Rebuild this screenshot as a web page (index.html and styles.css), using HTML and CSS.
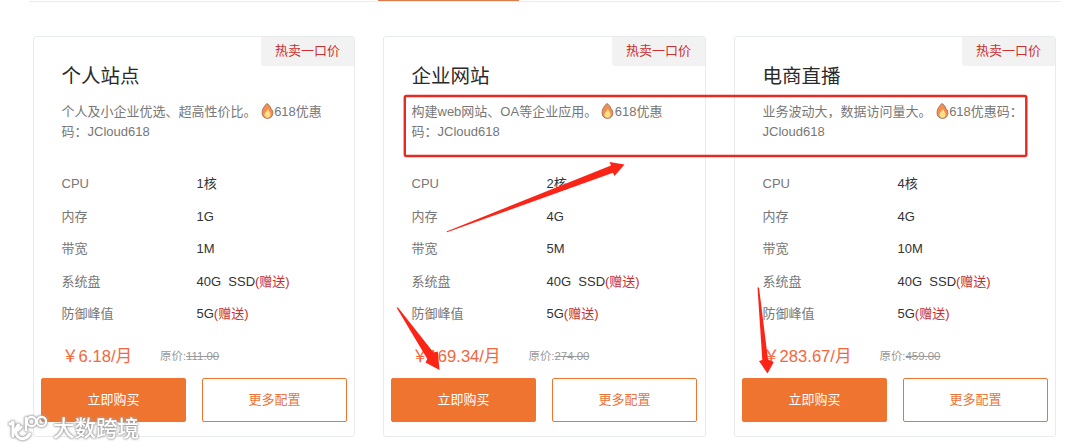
FILE: index.html
```
<!DOCTYPE html>
<html lang="zh-CN">

<head>
    <meta charset="utf-8">
    <title>云主机特惠</title>
    <link rel="stylesheet" href="styles.css">
</head>

<body>
    <svg class="sprite" width="0" height="0">
        <symbol id="fire" viewBox="0 0 12 16">
            <path d="M5.2 .6C7.2 1.3 8.8 3.2 9.6 5.8C11 7.2 11.5 8.8 11.4 10.3C11.2 13.4 9 15.4 6 15.4C3 15.4 .6 13.4 .6 10.3C.6 8 1 6 2.3 4.2C3.5 2.5 4.5 1.5 5.2 .6Z" fill="#f3904f" stroke="#8a6a55" stroke-width=".8" />
            <path d="M6.3 5.8C6.8 8 9.2 9.3 9 11.8C8.9 13.7 7.6 14.7 6 14.7C4.2 14.7 3 13.5 3 11.7C3 9.6 5.9 8.4 6.3 5.8Z" fill="#ffe08a" />
        </symbol>
    </svg>

    <div class="tabLine"><div class="tabActive"></div></div>

    <div class="cards">
        <div class="card">
            <span class="tag">热卖一口价</span>
            <h3>个人站点</h3>
            <p class="desc">个人及小企业优选、超高性价比。 <svg class="fire"><use href="#fire" /></svg>618优惠<br>码：JCloud618</p>
            <dl>
                <dt>CPU</dt><dd>1核</dd>
                <dt>内存</dt><dd>1G</dd>
                <dt>带宽</dt><dd>1M</dd>
                <dt>系统盘</dt><dd>40G&nbsp; SSD<em>(赠送)</em></dd>
                <dt>防御峰值</dt><dd>5G<em>(赠送)</em></dd>
            </dl>
            <div class="priceRow">
                <span class="price">￥6.18/月</span>
                <span class="old">原价:<del>111.00</del></span>
            </div>
            <div class="buttons">
                <a class="btn buy">立即购买</a>
                <a class="btn more">更多配置</a>
            </div>
        </div>

        <div class="card">
            <span class="tag">热卖一口价</span>
            <h3>企业网站</h3>
            <p class="desc">构建web网站、OA等企业应用。 <svg class="fire"><use href="#fire" /></svg>618优惠<br>码：JCloud618</p>
            <dl>
                <dt>CPU</dt><dd>2核</dd>
                <dt>内存</dt><dd>4G</dd>
                <dt>带宽</dt><dd>5M</dd>
                <dt>系统盘</dt><dd>40G&nbsp; SSD<em>(赠送)</em></dd>
                <dt>防御峰值</dt><dd>5G<em>(赠送)</em></dd>
            </dl>
            <div class="priceRow">
                <span class="price">￥169.34/月</span>
                <span class="old">原价:<del>274.00</del></span>
            </div>
            <div class="buttons">
                <a class="btn buy">立即购买</a>
                <a class="btn more">更多配置</a>
            </div>
        </div>

        <div class="card">
            <span class="tag">热卖一口价</span>
            <h3>电商直播</h3>
            <p class="desc">业务波动大，数据访问量大。 <svg class="fire"><use href="#fire" /></svg>618优惠码：<br>JCloud618</p>
            <dl>
                <dt>CPU</dt><dd>4核</dd>
                <dt>内存</dt><dd>4G</dd>
                <dt>带宽</dt><dd>10M</dd>
                <dt>系统盘</dt><dd>40G&nbsp; SSD<em>(赠送)</em></dd>
                <dt>防御峰值</dt><dd>5G<em>(赠送)</em></dd>
            </dl>
            <div class="priceRow">
                <span class="price">￥283.67/月</span>
                <span class="old">原价:<del>459.00</del></span>
            </div>
            <div class="buttons">
                <a class="btn buy">立即购买</a>
                <a class="btn more">更多配置</a>
            </div>
        </div>
    </div>

    <!-- red marks over the cards -->
    <svg class="marks" viewBox="0 0 1080 448">
        <rect x="404.8" y="96" width="621.5" height="60" rx="1.5" fill="none" stroke="#e22b22" stroke-width="2.4" />
        <g fill="#fb2517">
            <path d="M446.5 231.5L611 165.5L609.5 162L624.5 164.5L614.5 176L613 172.8L447 232.3Z" />
            <path d="M396.5 307.5L398 307.5L433.5 352.5L437.8 351.5L439.5 370L425.5 362.5L427.3 359Z" />
            <path d="M757.5 287.5L759 287.5L768 359.5L773.8 362L767.5 373.5L759 361L762.3 360Z" />
        </g>
    </svg>

    <div class="watermark">
        <svg width="40" height="28" viewBox="0 0 40 28" fill="none" stroke="#fff" stroke-linecap="round">
            <path d="M2 9Q4.5 8.500 5 6V21M10.5 10C7 13 7 19 10 22C13 25 19 24 21.5 19M10 15L13 12" stroke-width="3" />
            <path d="M18 3V15" stroke-width="2.4" />
            <circle cx="23.5" cy="6.500" r="4.6" stroke-width="2.2" />
            <circle cx="33.5" cy="6.500" r="4.6" stroke-width="2.2" />
        </svg>
        <span>大数跨境</span>
    </div>
</body>

</html>
```

FILE: styles.css
```
body {
    margin: 0;
    height: 448px;
    overflow: hidden;
    position: relative;
    background: #fff;
    font-family: "Liberation Sans", "Noto Sans CJK SC", sans-serif;
    font-size: 13px;
    color: #333;
}

.sprite {
    position: absolute;
}

.tabLine {
    height: 1px;
    margin: 0 19px 0 29px;
    border-bottom: 1px solid #e9eded;
}

.tabActive {
    width: 141px;
    height: 1px;
    margin-left: 349px;
    background: #dc7d50;
}

.cards {
    display: grid;
    grid-template-columns: 322px 323px 322px;
    column-gap: 28px;
    padding: 34px 0 0 33px;
}

.card {
    position: relative;
    box-sizing: border-box;
    height: 401px;
    border: 1px solid #e8eced;
    border-radius: 3px;
}

.tag {
    position: absolute;
    top: 0;
    right: 0;
    width: 93px;
    height: 29px;
    line-height: 28px;
    text-align: center;
    color: #c9302f;
    background: #f2f2f2;
    border-radius: 0 2px 0 3px;
}

h3 {
    margin: 24px 0 0 27.5px;
    font-size: 19.5px;
    font-weight: normal;
    line-height: 30px;
    color: #2a2a2a;
}

.desc {
    margin: 11px 0 0 27.5px;
    height: 39px;
    line-height: 19.5px;
    white-space: nowrap;
    color: #777;
}

.fire {
    width: 13px;
    height: 16px;
    margin: 0 0.5px 0 0.5px;
    vertical-align: -3px;
}

dl {
    display: grid;
    grid-template-columns: 135px 1fr;
    grid-auto-rows: 32.6px;
    line-height: 32.6px;
    margin: 27px 0 0 27.5px;
}

dt {
    color: #777;
}

dd {
    margin: 0;
}

em {
    font-style: normal;
    color: #cb2d2d;
}

.priceRow {
    display: flex;
    align-items: center;
    height: 30px;
    margin: 9.5px 0 0 28px;
}

.price {
    font-size: 16.6px;
    color: #f4663c;
}

.old {
    margin-left: 28px;
    font-size: 11.4px;
    color: #999;
}

.buttons {
    display: flex;
    gap: 16px;
    margin: 7.5px 0 0 7px;
}

.btn {
    box-sizing: border-box;
    width: 145px;
    height: 44px;
    line-height: 42px;
    text-align: center;
    border: 1px solid #ee742f;
    border-radius: 2px;
}

.buy {
    color: #fff;
    background: #ee742f;
}

.more {
    color: #ea7438;
}

.marks {
    position: absolute;
    top: 0;
    left: 0;
    width: 1080px;
    height: 448px;
}

.watermark {
    position: absolute;
    left: 8px;
    top: 415px;
    display: flex;
    align-items: center;
    color: #fff;
    font-size: 21.5px;
    font-weight: 500;
    line-height: 28px;
    filter: drop-shadow(0 0 1px #888) drop-shadow(0 0 1px #bbb);
}

.watermark span {
    margin-left: 5px;
}
```
